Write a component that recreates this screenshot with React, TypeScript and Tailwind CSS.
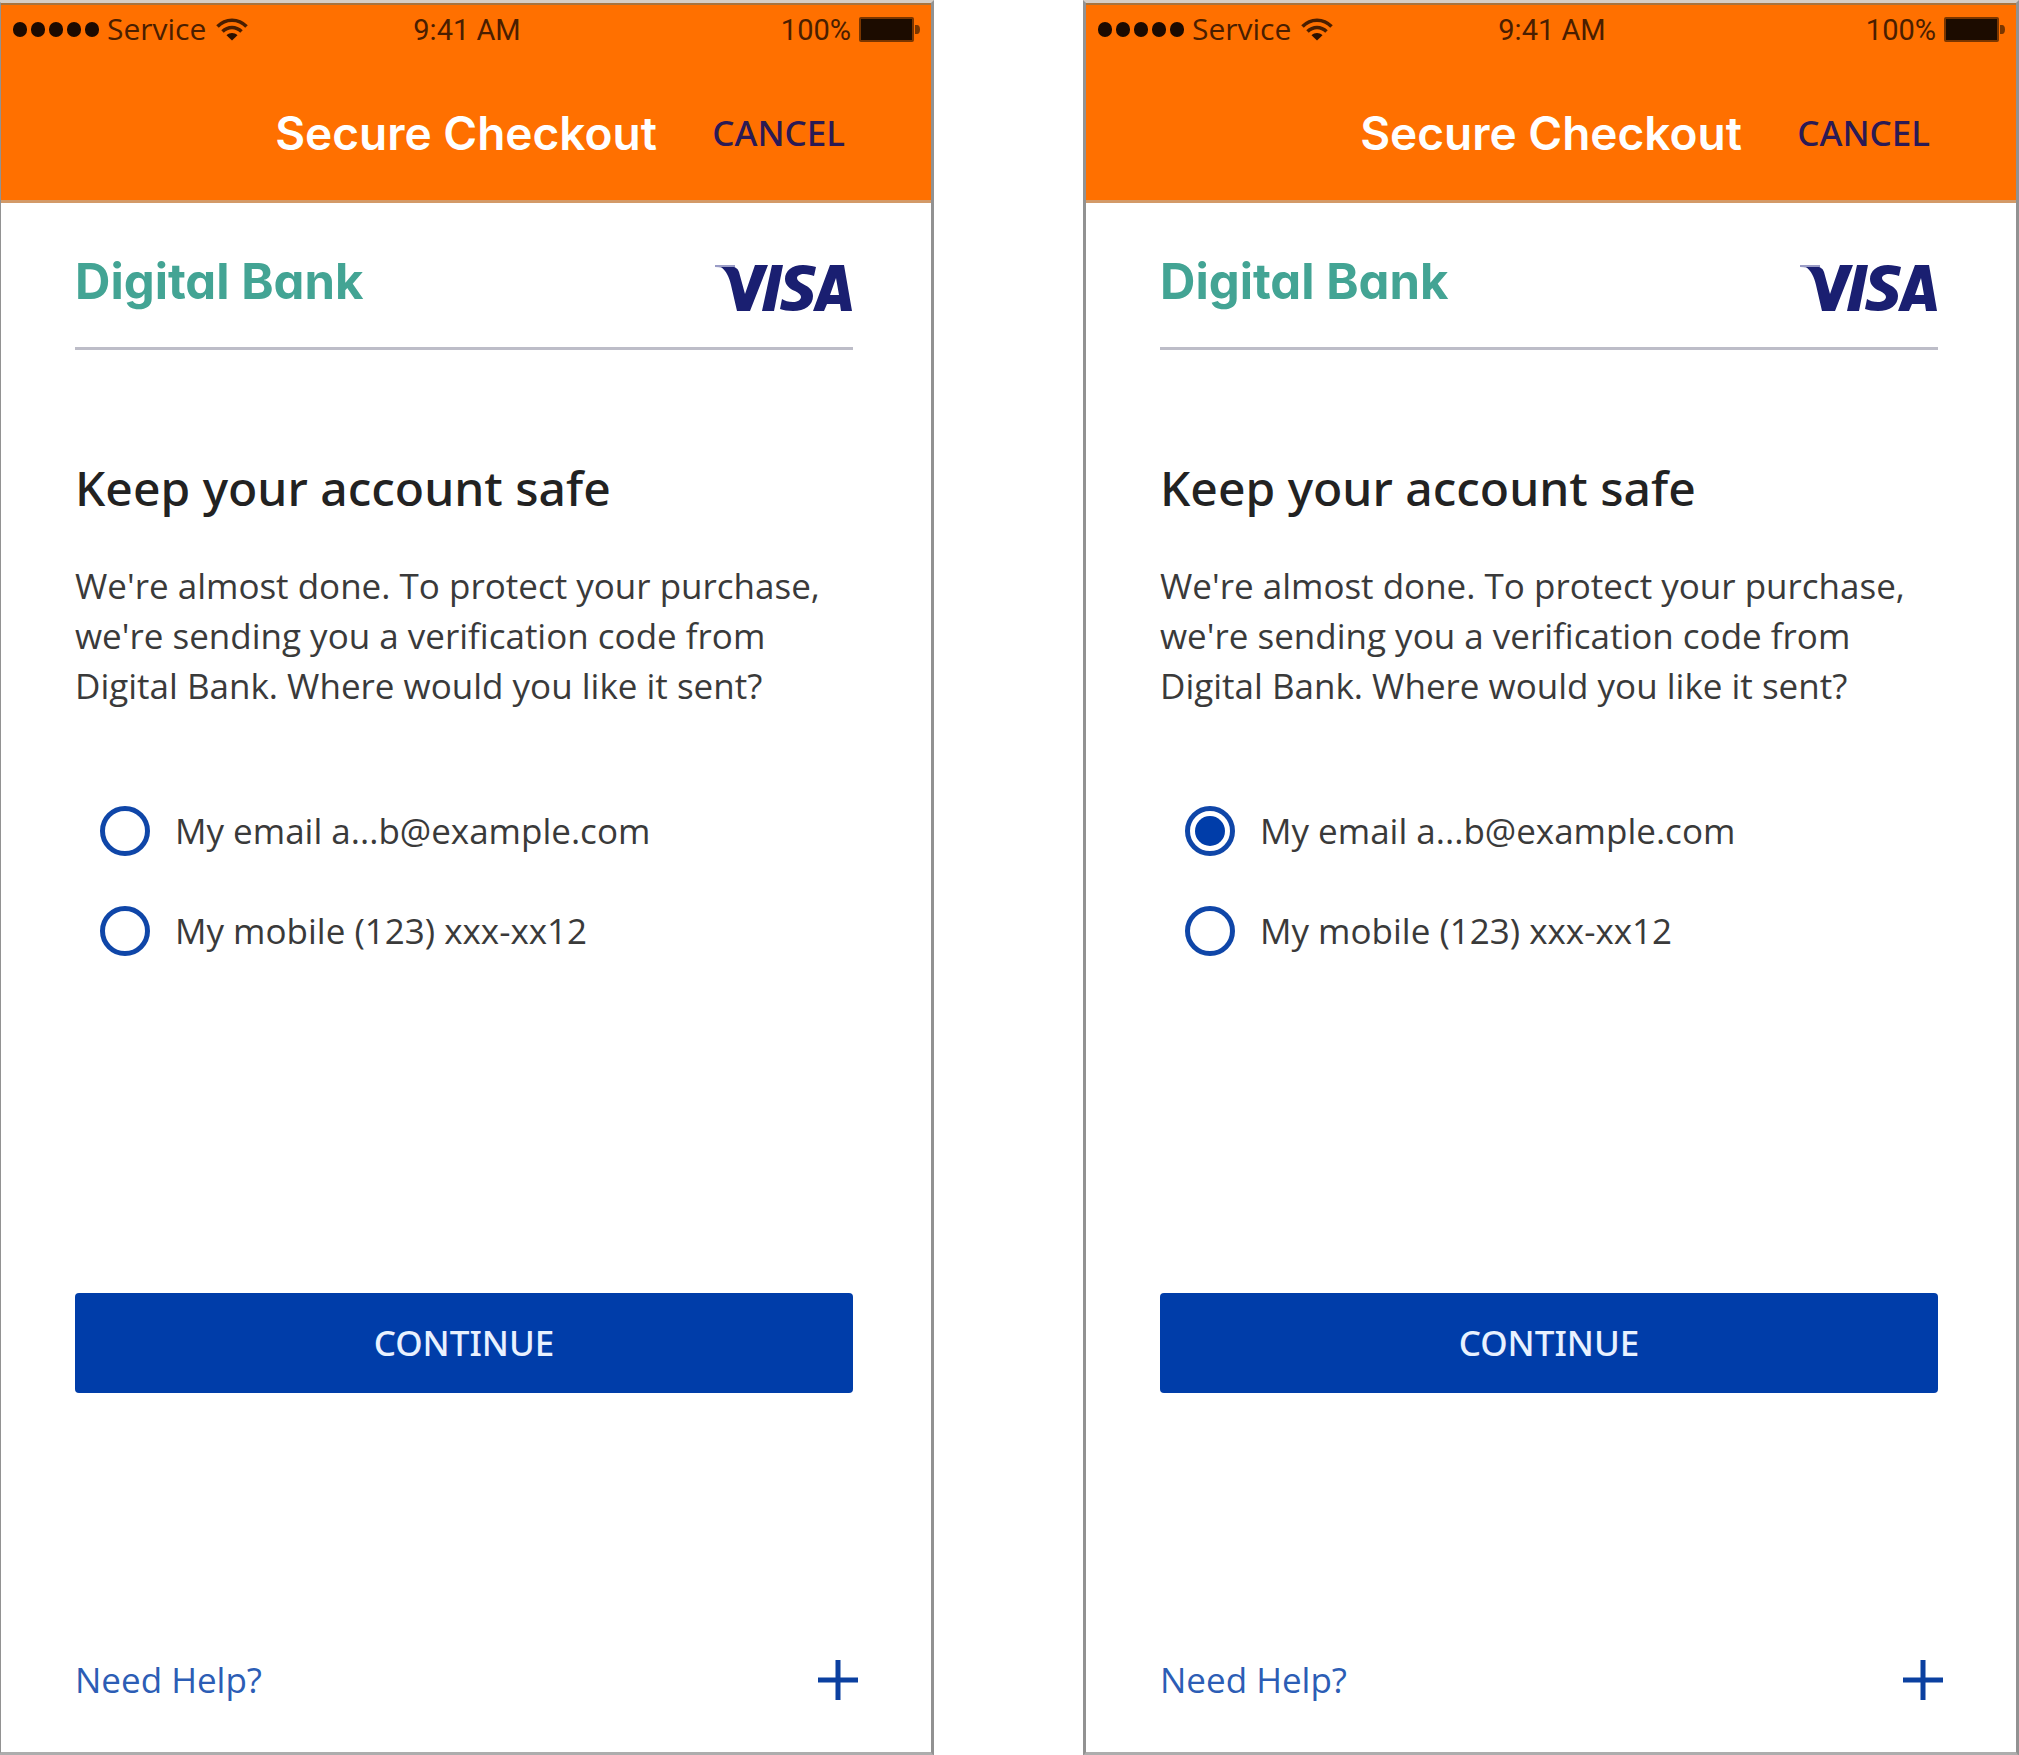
import { useState } from "react";

function WifiIcon() {
  return (
    <svg viewBox="0 0 32 23" className="h-[23px] w-8" aria-hidden="true">
      <g fill="none" stroke="#4a1e00" strokeWidth="3.500">
        <path d="M1.500 8.500C9.500 0 22.500 0 30.500 8.500" />
        <path d="M6.500 13.500C12 8 20 8 25.500 13.500" />
      </g>
      <path d="M10.500 17.200C13.500 14.300 18.500 14.300 21.500 17.200L16 22.500Z" fill="#2c1000" />
    </svg>
  );
}

function BatteryIcon() {
  return (
    <svg viewBox="0 0 62 25" className="h-[25px] w-[62px]" aria-hidden="true">
      <rect x="1" y="1" width="53" height="23" rx="1" fill="#1c0c00" stroke="#7a3600" strokeWidth="2" />
      <path d="M56 8h2c2 0 3 2 3 4.500s-1 4.500-3 4.500h-2z" fill="#7a3600" />
    </svg>
  );
}

function VisaLogo() {
  return (
    <svg viewBox="0 0 138 46" className="mt-3 h-[46px] w-[138px]" role="img" aria-label="Visa">
      <path d="M0 0H20V4L12 5C9 3 5 2 0 2Z" fill="#9a9cc6" />
      <g fill="#1a1f71">
        <path d="M6 2H17C21 2 23 4 24 7L30 29L40 0H53L35 46H22L16 20C14 11 11 6 6 2Z" />
        <path d="M57 0H68L59 46H47Z" />
        <path d="M101 2C97 1 93 0 88 0C77 0 70 6 70 14C70 20 75 24 80 26C84 28 86 30 86 32C86 35 82 37 78 37C73 37 70 36 67 34L65 44C68 45 73 46 78 46C90 46 98 40 98 31C98 25 94 22 88 19C84 17 82 15 82 13C82 11 85 9 89 9C93 9 96 10 99 11Z" />
        <path fillRule="evenodd" d="M115 0H129L137 46H126L125 39H112L109 46H98ZM121 13L115 30H124Z" />
      </g>
    </svg>
  );
}

const options = [
  { id: "email", label: "My email a...b@example.com" },
  { id: "mobile", label: "My mobile (123) xxx-xx12" },
];

function Phone({ name, initial }: { name: string; initial: string }) {
  const [choice, setChoice] = useState(initial);
  return (
    <section className="flex min-w-0 flex-col border-x-[3px] border-t-[3px] border-b-4 border-x-[#929292] border-t-[#d6cec6] border-b-[#adadad] bg-white">
      <header className="border-t-2 border-b-[3px] border-t-[#a8743f] border-b-[#d39a68] bg-[#ff7000]">
        <div className="grid h-12 grid-cols-[1fr_auto_1fr] items-center pr-[10px] pl-3 font-[Roboto,sans-serif] text-[29px] text-[#4a1e00]">
          <div className="flex items-center">
            <div className="flex gap-1">
              {[0, 1, 2, 3, 4].map((i) => (
                <span key={i} className="h-[15px] w-[14px] rounded-full bg-[#1c0a00]" />
              ))}
            </div>
            <span className="ml-2 font-['Open_Sans',sans-serif] text-[30px] leading-10">Service</span>
            <span className="ml-[10px]">
              <WifiIcon />
            </span>
          </div>
          <span className="pt-1">9:41 AM</span>
          <div className="flex items-center justify-end gap-2">
            <span className="pt-1">100%</span>
            <BatteryIcon />
          </div>
        </div>
        <div className="grid h-[147px] grid-cols-[1fr_auto_1fr] items-center pt-3">
          <h1 className="col-start-2 font-[Inter,sans-serif] text-[46px] leading-[60px] font-semibold text-white">Secure Checkout</h1>
          <button type="button" className="mr-[86px] justify-self-end font-['Noto_Sans',sans-serif] text-[35px] leading-10 font-medium text-[#2b1a55]">
            CANCEL
          </button>
        </div>
      </header>
      <main className="flex flex-col pr-[78px] pl-[74px]">
        <div className="flex h-[147px] items-center justify-between border-b-[3px] border-[#bdbdc8] pt-[14px]">
          <span className="font-[Inter,sans-serif] text-[49px] leading-[60px] font-bold text-[#43a494] [font-feature-settings:'cv11']">Digital Bank</span>
          <VisaLogo />
        </div>
        <h2 className="mt-[104px] font-['Noto_Sans',sans-serif] text-[48px] leading-[68px] font-medium text-[#222222]">Keep your account safe</h2>
        <p className="mt-[39px] text-[35px] leading-[50px] text-[#3a3a3a]">
          We're almost done. To protect your purchase, we're sending you a verification code from Digital Bank. Where would you like it sent?
        </p>
        <fieldset aria-label="Delivery method" className="mt-[95px] flex flex-col gap-[50px] pl-[25px]">
          {options.map((o) => (
            <label key={o.id} className="flex h-[50px] items-center gap-[25px] text-[35px] leading-[50px] text-[#3a3a3a]">
              <input
                type="radio"
                name={name}
                value={o.id}
                checked={choice === o.id}
                onChange={() => setChoice(o.id)}
                className="grid size-[50px] shrink-0 appearance-none place-items-center rounded-full border-[5px] border-[#0f46a8] bg-white before:size-[30px] before:rounded-full checked:before:bg-[#003da9]"
              />
              {o.label}
            </label>
          ))}
        </fieldset>
        <button type="button" className="mt-[337px] h-[100px] rounded-[4px] bg-[#003da9] font-['Noto_Sans',sans-serif] text-[35px] leading-10 font-medium text-[#e8f1ff]">
          CONTINUE
        </button>
      </main>
      <footer className="mt-[262px] mb-[47px] flex items-center justify-between pr-[73px] pl-[74px]">
        <a href="#help" className="text-[35px] leading-[50px] text-[#2c5db5]">
          Need Help?
        </a>
        <button type="button" aria-label="Expand help">
          <svg viewBox="0 0 40 40" className="size-10" fill="none" stroke="#0b40a0" strokeWidth="5" aria-hidden="true">
            <path d="M0 20H40M20 0V40" />
          </svg>
        </button>
      </footer>
    </section>
  );
}

export default function App() {
  return (
    <div className="overflow-x-hidden bg-white font-['Open_Sans',sans-serif]">
      <div className="-ml-[2px] grid grid-cols-2 gap-[149px]">
        <Phone name="delivery-left" initial="" />
        <Phone name="delivery-right" initial="email" />
      </div>
    </div>
  );
}
